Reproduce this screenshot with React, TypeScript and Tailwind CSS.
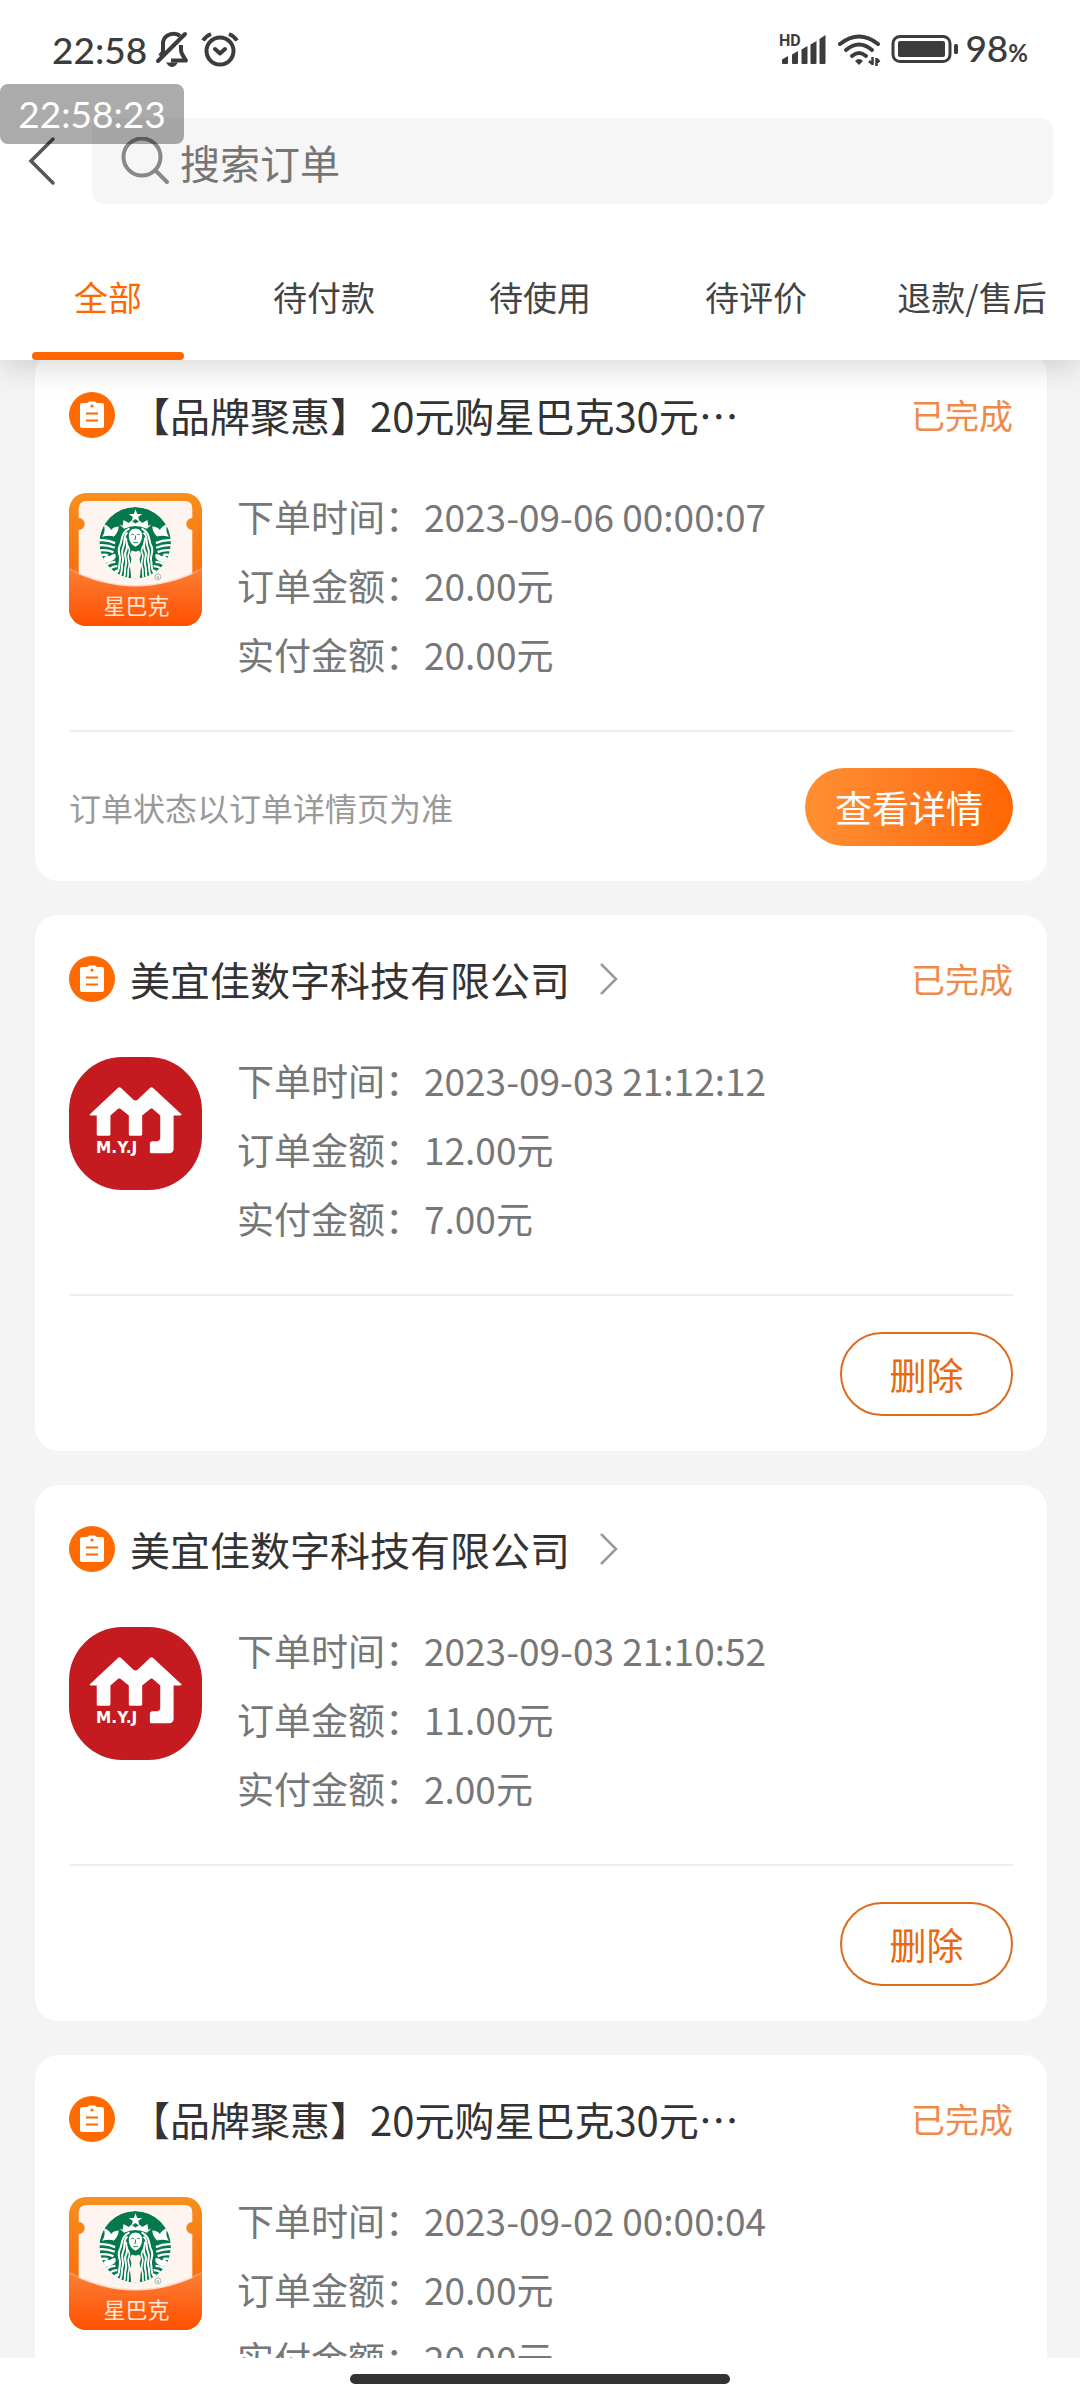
import React, { useState } from 'react';

interface Order {
  id: string;
  title: string;
  shop: 'starbucks' | 'myj';
  time: string;
  amount: string;
  paid: string;
  status?: string;
  hasDetail: boolean;
}

const TABS = ['全部', '待付款', '待使用', '待评价', '退款/售后'];

const ORDERS: Order[] = [
  {
    id: '1',
    title: '【品牌聚惠】20元购星巴克30元…',
    shop: 'starbucks',
    time: '2023-09-06 00:00:07',
    amount: '20.00元',
    paid: '20.00元',
    status: '已完成',
    hasDetail: true,
  },
  {
    id: '2',
    title: '美宜佳数字科技有限公司',
    shop: 'myj',
    time: '2023-09-03 21:12:12',
    amount: '12.00元',
    paid: '7.00元',
    status: '已完成',
    hasDetail: false,
  },
  {
    id: '3',
    title: '美宜佳数字科技有限公司',
    shop: 'myj',
    time: '2023-09-03 21:10:52',
    amount: '11.00元',
    paid: '2.00元',
    hasDetail: false,
  },
  {
    id: '4',
    title: '【品牌聚惠】20元购星巴克30元…',
    shop: 'starbucks',
    time: '2023-09-02 00:00:04',
    amount: '20.00元',
    paid: '20.00元',
    status: '已完成',
    hasDetail: true,
  },
];

const StatusBar: React.FC = () => (
  <div className="flex h-[98px] items-center justify-between px-[52px] font-[Lato,sans-serif] text-[#3c3c3c]">
    <div className="flex items-center">
      <span className="text-[37px] leading-none font-medium">22:58</span>
      <svg className="ml-2 h-9 w-9" viewBox="0 0 36 36" fill="none" stroke="currentColor" strokeWidth="4" strokeLinejoin="round">
        <path d="M25 5C21 1 10 2 8 11V21L5 25" />
        <path d="M3 30L30 3" strokeLinecap="round" />
        <path d="M26 14V19C26 23 29 26 31 29.5H16" />
        <path d="M11 31.5H23Q20 36 17 36Q14 36 11 31.5Z" fill="currentColor" stroke="none" />
      </svg>
      <svg className="ml-2.5 h-9 w-[38px]" viewBox="0 0 38 36" fill="none" stroke="currentColor" strokeWidth="4">
        <circle cx="19" cy="20" r="13.5" />
        <path d="M14 18L19 22.5L24 18" strokeLinecap="round" strokeLinejoin="round" />
        <path d="M2 9.5Q5 5 10 3M36 9.5Q33 5 28 3" />
      </svg>
    </div>
    <div className="flex items-center">
      <svg className="h-9 w-12" viewBox="0 0 48 36" fill="currentColor">
        <text x="0" y="15" fontSize="16" fontWeight="700" fontFamily="Roboto, sans-serif">HD</text>
        <path d="M3 28.5L9 25V32Q9 33 8 33H4Q3 33 3 32ZM13 23.5L19 20V32Q19 33 18 33H14Q13 33 13 32ZM22.500 18.5L28.5 15V32Q28.5 33 27.5 33H23.5Q22.500 33 22.500 32ZM31.5 13.5L37.5 10V32Q37.5 33 36.5 33H32.5Q31.5 33 31.5 32ZM40.5 8L46.5 4V32Q46.5 33 45.5 33H41.5Q40.5 33 40.5 32Z" />
      </svg>
      <svg className="ml-2 h-9 w-12" viewBox="-2 0 48 36" fill="none" stroke="currentColor" strokeWidth="4">
        <path d="M3 13Q22 -2 41 13" strokeLinecap="round" />
        <path d="M9 19Q22 8 35 19M15 25Q22 19 29 25" strokeLinecap="round" />
        <path d="M18 30Q22 26 26 30L22 34Z" fill="currentColor" stroke="none" />
        <path d="M35.5 26V34M35.5 33L32 30M39.5 35V27M39.5 28L42.5 31" strokeWidth="2.5" />
      </svg>
      <svg className="ml-2 h-[30px] w-[68px]" viewBox="0 0 68 30" fill="currentColor">
        <rect x="2" y="2.5" width="57" height="25" rx="7" fill="none" stroke="currentColor" strokeWidth="3" />
        <rect x="7" y="7" width="47" height="16" rx="2" />
        <rect x="63" y="10" width="4" height="10" rx="1.5" />
      </svg>
      <span className="ml-1.5 text-[37px] leading-none font-medium">
        98<span className="text-2xl font-bold">%</span>
      </span>
    </div>
  </div>
);

const StarbucksLogo: React.FC = () => (
  <svg className="size-[133px] shrink-0" viewBox="27 24 398 398" role="img" aria-label="星巴克">
    <defs>
      <linearGradient id="sbBack" x1="0" y1="0" x2="0" y2="1">
        <stop offset="0" stopColor="#f78f1e" />
        <stop offset="0.7" stopColor="#ff6a08" />
      </linearGradient>
      <linearGradient id="sbPocket" x1="0" y1="0" x2="0" y2="1">
        <stop offset="0" stopColor="#fb7d35" />
        <stop offset="1" stopColor="#ff5000" />
      </linearGradient>
      <clipPath id="sbTile">
        <rect x="27" y="24" width="398" height="398" rx="52" />
      </clipPath>
      <clipPath id="sbDisc">
        <circle cx="225" cy="173" r="107" />
      </clipPath>
      <g id="sbHalf" fill="none" stroke="#fff">
        <path d="M131 117Q148 124 153 135Q160 124 176 124Q174 143 161 154Q146 149 126 155Q138 139 131 117Z" fill="#fff" stroke="none" />
        <path d="M112 166Q140 162 165 174M112 181Q140 177 164 188M114 196Q140 192 160 201M118 211Q132 207 143 210M140 238Q152 230 166 230M148 251Q160 243 172 243M160 264Q168 256 177 256" strokeWidth="7" />
        <path d="M128 222Q138 207 148 213Q160 204 166 207Q170 219 158 226Q144 236 130 232Z" fill="#fff" stroke="none" />
        <path d="M208 130C180 143 188 166 178 184C170 202 184 211 179 228C176 240 182 247 170 264" strokeWidth="6" />
        <path d="M202 142C186 154 198 172 188 190C180 206 194 216 187 234C183 246 189 252 180 273" strokeWidth="6" />
        <path d="M198 158C196 170 206 182 197 198C189 212 203 222 197 240C192 253 198 262 191 280" strokeWidth="6" />
        <path d="M199 174C203 186 213 190 206 204C199 217 212 228 206 246C201 258 207 268 201 285" strokeWidth="5" />
      </g>
    </defs>
    <g clipPath="url(#sbTile)">
      <rect x="27" y="24" width="398" height="398" fill="url(#sbBack)" />
      <path d="M76 48H377Q396 50 396 70V99A18 18 0 0 0 396 135V310H56V135A18 18 0 0 0 56 99V70Q57 50 76 48Z" fill="#fef5f0" />
      <g clipPath="url(#sbDisc)">
        <circle cx="225" cy="173" r="107" fill="#05784d" />
        <path d="M216 196Q226 202 236 196Q246 204 240 216Q236 226 243 238L238 290H214L209 238Q216 226 212 216Q206 204 216 196Z" fill="#fef5f0" />
        <use href="#sbHalf" />
        <use href="#sbHalf" transform="translate(452 0) scale(-1 1)" />
        <path d="M226 73L231 87H246L234 96L238 110L226 102L214 110L218 96L206 87H221Z" fill="#fff" />
        <path d="M178 118L188 122L190 105L206 114L213 107L226 115L239 107L246 114L262 105L264 122L274 118L260 131Q226 115 192 131Z" fill="#fff" />
        <path d="M226 130Q248 132 246 156Q243 178 226 185Q209 178 206 156Q204 132 226 130Z" fill="#fff" />
        <path d="M213 149Q218 146 222 149M230 149Q235 146 239 149M226 151V162H222" fill="none" stroke="#05784d" strokeWidth="2.5" />
        <path d="M219 171Q226 175 233 171" fill="none" stroke="#05784d" strokeWidth="3" />
      </g>
      <circle cx="293" cy="275" r="9" fill="none" stroke="#7ba894" strokeWidth="2" />
      <text x="289" y="280" fontSize="12" fontFamily="Roboto, sans-serif" fill="#7ba894">R</text>
      <path d="M27 248Q226 352 425 248V256Q226 360 27 256Z" fill="#f3c2a5" opacity="0.5" />
      <path d="M27 254Q226 354 425 254V422H27Z" fill="url(#sbPocket)" />
      <text x="229" y="387" textAnchor="middle" fontSize="66" fontFamily="'Noto Sans CJK SC', sans-serif" fill="#ffe6d6">星巴克</text>
    </g>
  </svg>
);

const MyjLogo: React.FC = () => (
  <svg className="size-[133px] shrink-0" viewBox="27 24 398 398" role="img" aria-label="美宜佳">
    <rect x="27" y="24" width="398" height="398" rx="160" fill="#c41a20" />
    <path
      d="M88 197L174 116Q178 113 182 116L220 152Q226 157 232 152L270 116Q274 113 278 116L365 197L360 199H340V300Q339 311 327 312H272Q269 311 269 307V282Q270 277 275 276H292Q299 275 300 268V199L276 178H272L246 199V256Q245 260 241 260H210Q206 260 206 256V199L180 178H175L151 199V256Q150 260 146 260H114Q110 260 110 256V199H91Z"
      fill="#fff"
    />
    <text x="108" y="311" fontSize="46" fontWeight="700" fontFamily="'DejaVu Sans', sans-serif" fill="#fff">M.Y.J</text>
  </svg>
);

const OrderIcon: React.FC = () => (
  <svg className="size-[46px] shrink-0" viewBox="0 0 46 46" aria-hidden="true">
    <circle cx="23" cy="23" r="23" fill="#ff6a00" />
    <path d="M13 11H17Q19 11 20 9.5H26Q27 11 29 11H33Q35 11 35 13V34Q35 36 33 36H13Q11 36 11 34V13Q11 11 13 11Z" fill="#fff" />
    <circle cx="23" cy="14" r="1.6" fill="#ff6a00" />
    <path d="M17 21.5H29M17 28.5H29" stroke="#ff6a00" strokeWidth="2.2" />
  </svg>
);

const InfoRow: React.FC<{ label: string; value: string }> = ({ label, value }) => (
  <div className="flex gap-0.5">
    <dt>{label}：</dt>
    <dd>{value}</dd>
  </div>
);

const OrderCard: React.FC<{ order: Order }> = ({ order }) => (
  <article className="rounded-3xl bg-white px-[34px] pt-[41px] pb-[35px]">
    <div className="flex h-[46px] items-center">
      <OrderIcon />
      <h2 className="ml-[15px] text-[40px] leading-[46px] whitespace-nowrap text-[#333]">{order.title}</h2>
      {!order.hasDetail && (
        <a href="#shop" aria-label={order.title} className="ml-[30px]">
          <svg className="h-8 w-[18px]" viewBox="0 0 18 32" fill="none" stroke="#999" strokeWidth="2.5">
            <path d="M1 1L16 16L1 31" />
          </svg>
        </a>
      )}
      {order.status && (
        <span className="ml-auto text-[34px] leading-[46px] text-[#f08a4b]">{order.status}</span>
      )}
    </div>

    <div className="mt-[55px] flex">
      {order.shop === 'starbucks' ? <StarbucksLogo /> : <MyjLogo />}
      <dl className="ml-[35px] flex flex-col gap-[23px] text-[37px] leading-[46px] whitespace-nowrap text-[#777]">
        <InfoRow label="下单时间" value={order.time} />
        <InfoRow label="订单金额" value={order.amount} />
        <InfoRow label="实付金额" value={order.paid} />
      </dl>
    </div>

    <div className="mt-[53px] flex items-center justify-between border-t-2 border-[#eee] pt-9">
      {order.hasDetail ? (
        <>
          <p className="text-[32px] leading-[46px] text-[#999]">订单状态以订单详情页为准</p>
          <button className="h-[78px] w-52 rounded-full bg-linear-to-r from-[#ff8f33] to-[#ff6600] text-[37px] leading-none text-white">
            查看详情
          </button>
        </>
      ) : (
        <button className="ml-auto h-[84px] w-[173px] rounded-full border-2 border-[#dc6c20] text-[37px] leading-none text-[#e8690f]">
          删除
        </button>
      )}
    </div>
  </article>
);

const App: React.FC = () => {
  const [activeTab, setActiveTab] = useState(TABS[0]);
  const [keyword, setKeyword] = useState('');

  return (
    <div lang="zh-CN" className="flex h-screen flex-col overflow-hidden bg-[#f4f4f4] font-['Noto_Sans_CJK_SC',sans-serif]">
      <header className="relative z-10 shrink-0 bg-white shadow-[0_4px_32px_rgba(0,0,0,0.18)]">
        <StatusBar />

        {/* Recording clock floats over the page */}
        <div className="absolute top-[84px] left-0 z-20 flex h-[60px] w-[184px] items-center justify-center rounded-lg bg-black/33 font-[Lato,sans-serif] text-[37px] text-white">
          22:58:23
        </div>

        <div className="mt-5 flex items-center pr-[27px] pl-[28px]">
          <button aria-label="返回">
            <svg className="h-[50px] w-7" viewBox="0 0 28 50" fill="none" stroke="#555" strokeWidth="3.5" strokeLinecap="round">
              <path d="M25 3L3 25L25 47" />
            </svg>
          </button>
          <label className="ml-9 flex h-[86px] flex-1 items-center gap-2.5 rounded-xl bg-[#f6f6f6] pt-0.5 pl-[28px]">
            <svg className="size-[50px] shrink-0" viewBox="0 0 50 50" fill="none" stroke="#888" strokeWidth="4" strokeLinecap="round">
              <circle cx="22" cy="20" r="18.5" />
              <path d="M35 33L47 45" />
            </svg>
            <input
              type="text"
              aria-label="搜索订单"
              placeholder="搜索订单"
              value={keyword}
              onChange={(e) => setKeyword(e.target.value)}
              className="w-full bg-transparent text-[40px] leading-[60px] text-[#333] outline-none placeholder:text-[#757575]"
            />
          </label>
        </div>

        <nav className="mt-8 flex">
          {TABS.map((tab) => (
            <button
              key={tab}
              onClick={() => setActiveTab(tab)}
              className={`flex h-[124px] flex-1 basis-0 flex-col items-center justify-end text-[34px] whitespace-nowrap ${
                tab === activeTab ? 'text-[#ff6600]' : 'text-[#444]'
              }`}
            >
              <span className="leading-[50px]">{tab}</span>
              <span className={`mt-[30px] h-2 w-[70%] rounded-full ${tab === activeTab ? 'bg-[#ff6600]' : ''}`} />
            </button>
          ))}
        </nav>
      </header>

      <main className="min-h-0 flex-1 overflow-hidden">
        <div className="-mt-[9px] flex flex-col gap-[34px] pr-[33px] pl-[35px]">
          {ORDERS.map((order) => (
            <OrderCard key={order.id} order={order} />
          ))}
        </div>
      </main>

      <footer className="flex h-[42px] shrink-0 items-center justify-center bg-white">
        <div className="h-2.5 w-[380px] rounded-full bg-[#333]" />
      </footer>
    </div>
  );
};

export default App;
